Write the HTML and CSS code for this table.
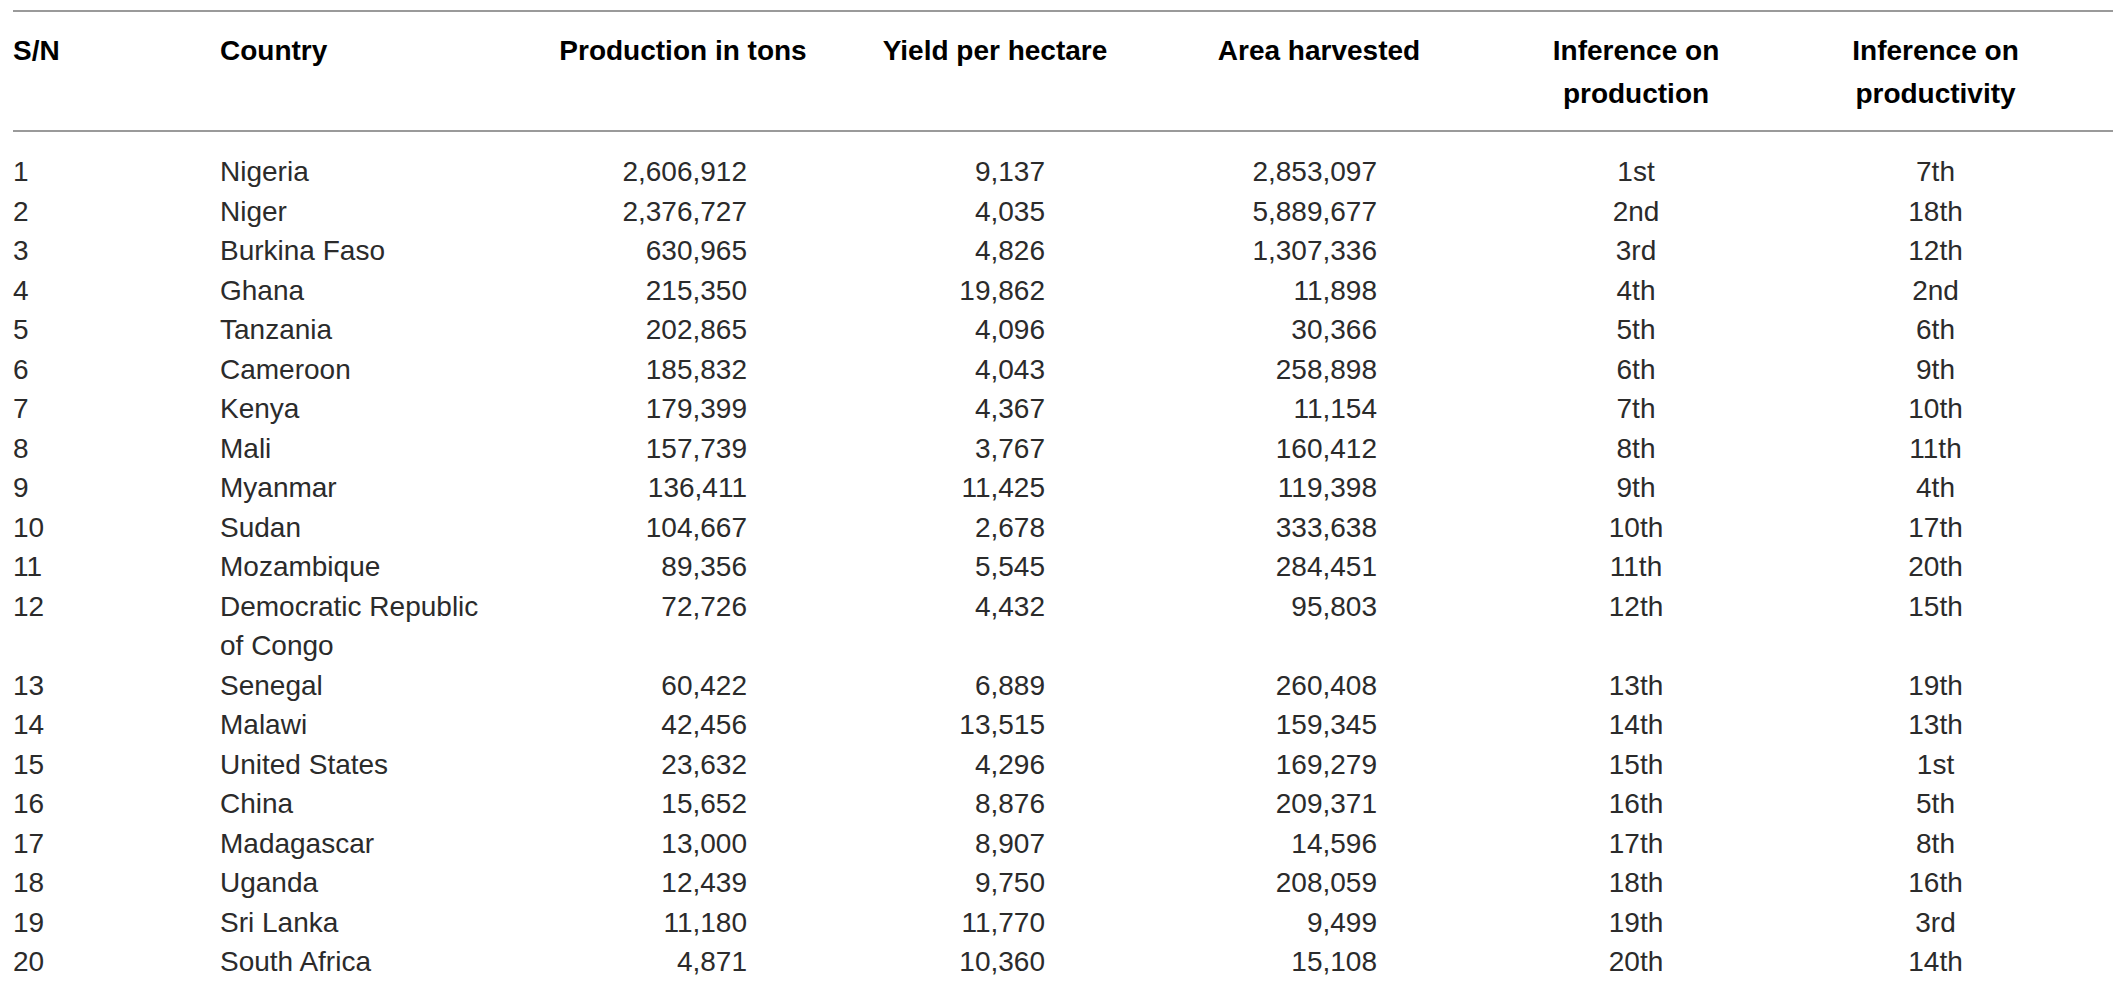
FILE: index.html
```html
<!DOCTYPE html>
<html lang="en">
<head>
	<meta charset="UTF-8">
	<title>Production and productivity by country</title>
	<link rel="stylesheet" href="styles.css">
</head>
<body>
<table class="tbl">
	<colgroup>
		<col class="c-sn">
		<col class="c-country">
		<col class="c-prod">
		<col class="c-yield">
		<col class="c-area">
		<col class="c-infp">
		<col class="c-infy">
	</colgroup>
	<thead>
		<tr>
			<th class="l">S/N</th>
			<th class="l">Country</th>
			<th class="prod">Production in tons</th>
			<th class="yield">Yield per hectare</th>
			<th class="area">Area harvested</th>
			<th class="infp">Inference on<br>production</th>
			<th class="infy">Inference on<br>productivity</th>
		</tr>
	</thead>
	<tbody>
		<tr><td>1</td><td>Nigeria</td><td class="prod">2,606,912</td><td class="yield">9,137</td><td class="area">2,853,097</td><td class="infp">1st</td><td class="infy">7th</td></tr>
		<tr><td>2</td><td>Niger</td><td class="prod">2,376,727</td><td class="yield">4,035</td><td class="area">5,889,677</td><td class="infp">2nd</td><td class="infy">18th</td></tr>
		<tr><td>3</td><td>Burkina Faso</td><td class="prod">630,965</td><td class="yield">4,826</td><td class="area">1,307,336</td><td class="infp">3rd</td><td class="infy">12th</td></tr>
		<tr><td>4</td><td>Ghana</td><td class="prod">215,350</td><td class="yield">19,862</td><td class="area">11,898</td><td class="infp">4th</td><td class="infy">2nd</td></tr>
		<tr><td>5</td><td>Tanzania</td><td class="prod">202,865</td><td class="yield">4,096</td><td class="area">30,366</td><td class="infp">5th</td><td class="infy">6th</td></tr>
		<tr><td>6</td><td>Cameroon</td><td class="prod">185,832</td><td class="yield">4,043</td><td class="area">258,898</td><td class="infp">6th</td><td class="infy">9th</td></tr>
		<tr><td>7</td><td>Kenya</td><td class="prod">179,399</td><td class="yield">4,367</td><td class="area">11,154</td><td class="infp">7th</td><td class="infy">10th</td></tr>
		<tr><td>8</td><td>Mali</td><td class="prod">157,739</td><td class="yield">3,767</td><td class="area">160,412</td><td class="infp">8th</td><td class="infy">11th</td></tr>
		<tr><td>9</td><td>Myanmar</td><td class="prod">136,411</td><td class="yield">11,425</td><td class="area">119,398</td><td class="infp">9th</td><td class="infy">4th</td></tr>
		<tr><td>10</td><td>Sudan</td><td class="prod">104,667</td><td class="yield">2,678</td><td class="area">333,638</td><td class="infp">10th</td><td class="infy">17th</td></tr>
		<tr><td>11</td><td>Mozambique</td><td class="prod">89,356</td><td class="yield">5,545</td><td class="area">284,451</td><td class="infp">11th</td><td class="infy">20th</td></tr>
		<tr><td>12</td><td>Democratic Republic of Congo</td><td class="prod">72,726</td><td class="yield">4,432</td><td class="area">95,803</td><td class="infp">12th</td><td class="infy">15th</td></tr>
		<tr><td>13</td><td>Senegal</td><td class="prod">60,422</td><td class="yield">6,889</td><td class="area">260,408</td><td class="infp">13th</td><td class="infy">19th</td></tr>
		<tr><td>14</td><td>Malawi</td><td class="prod">42,456</td><td class="yield">13,515</td><td class="area">159,345</td><td class="infp">14th</td><td class="infy">13th</td></tr>
		<tr><td>15</td><td>United States</td><td class="prod">23,632</td><td class="yield">4,296</td><td class="area">169,279</td><td class="infp">15th</td><td class="infy">1st</td></tr>
		<tr><td>16</td><td>China</td><td class="prod">15,652</td><td class="yield">8,876</td><td class="area">209,371</td><td class="infp">16th</td><td class="infy">5th</td></tr>
		<tr><td>17</td><td>Madagascar</td><td class="prod">13,000</td><td class="yield">8,907</td><td class="area">14,596</td><td class="infp">17th</td><td class="infy">8th</td></tr>
		<tr><td>18</td><td>Uganda</td><td class="prod">12,439</td><td class="yield">9,750</td><td class="area">208,059</td><td class="infp">18th</td><td class="infy">16th</td></tr>
		<tr><td>19</td><td>Sri Lanka</td><td class="prod">11,180</td><td class="yield">11,770</td><td class="area">9,499</td><td class="infp">19th</td><td class="infy">3rd</td></tr>
		<tr><td>20</td><td>South Africa</td><td class="prod">4,871</td><td class="yield">10,360</td><td class="area">15,108</td><td class="infp">20th</td><td class="infy">14th</td></tr>
	</tbody>
</table>
</body>
</html>
```

FILE: styles.css
```css
body{
	margin:0;
	padding:10px 14px 0 13px;
	background:#fff;
	font-family:"Liberation Sans", Arial, sans-serif;
	color:#2b2b2b;
}
.tbl{
	width:2100px;
	border-collapse:collapse;
	table-layout:fixed;
	font-size:28px;
}
.c-sn{ width:207px; }
.c-country{ width:280px; }
.c-prod{ width:366px; }
.c-yield{ width:258px; }
.c-area{ width:390px; }
.c-infp{ width:244px; }
.c-infy{ width:355px; }

/* header */
.tbl thead th{
	border-top:2px solid #9a9a9a;
	border-bottom:2px solid #9a9a9a;
	padding:17px 0 15px 0;
	line-height:43px;
	font-weight:bold;
	color:#000;
	vertical-align:top;
	text-align:center;
	white-space:nowrap;
}
.tbl thead th.l{
	text-align:left;
}

/* body */
.tbl tbody td{
	padding:0;
	line-height:39.5px;
	vertical-align:top;
	text-align:left;
}
.tbl tbody tr:first-child td{
	padding-top:20px;
}
.tbl tbody td.prod{
	text-align:right;
	padding-right:119px;
}
.tbl tbody td.yield{
	text-align:right;
	padding-right:79px;
}
.tbl tbody td.area{
	text-align:right;
	padding-right:137px;
}
.tbl tbody td.infp,
.tbl tbody td.infy{
	text-align:center;
}
```
